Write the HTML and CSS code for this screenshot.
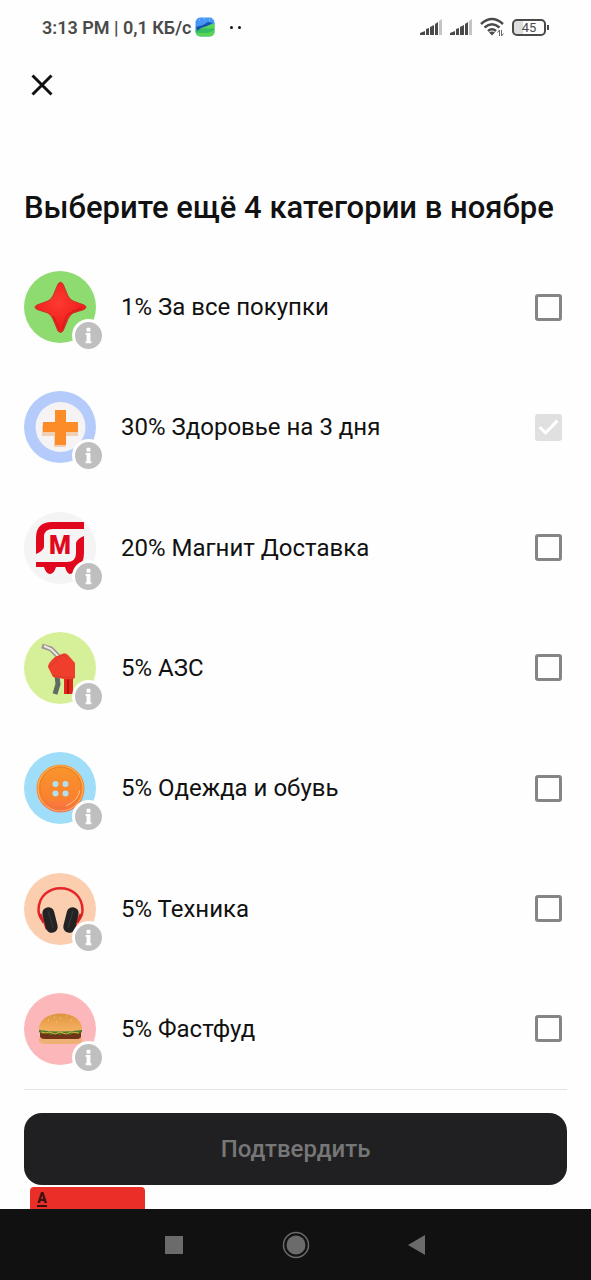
FILE: index.html
```html
<!DOCTYPE html>
<html lang="ru">
<head>
    <meta charset="UTF-8">
    <meta name="viewport" content="width=device-width, initial-scale=1.0">
    <title>Категории кэшбэка</title>
    <link rel="stylesheet" href="styles.css">
</head>
<body>

<!-- Shared icons -->
<svg class="sprite" aria-hidden="true">
    <symbol id="info" viewBox="0 0 28 28">
        <rect x="12" y="6" width="4" height="4" rx="1"/>
        <path d="M11 11.500h5v8.500h1v2h-6v-2h1v-6.500h-1z"/>
    </symbol>
    <symbol id="signal" viewBox="0 0 24 18">
        <path d="M0 17v-2l5-2v4zM6 17v-6l3-1v7zM10 17v-8l4-2v10zM15 17v-11l3-2v13z" fill="#4a4a4a"/>
        <path d="M19 17v-14l3-2v16z" fill="#c4c4c4"/>
    </symbol>
</svg>

<div class="status-bar">
    <span class="clock">3:13 PM | 0,1 КБ/с</span>
    <svg class="app-icon" viewBox="0 0 20 20">
        <rect x="0.500" y="0.500" width="19" height="19" rx="5" fill="#4596f5"/>
        <path d="M0.500 12C6 6 13 10 19.500 6V15Q19 19.500 14 19.500H6Q1 19.500 0.500 14z" fill="#58d653"/>
        <path d="M1 14C6 9 13 13 19 11V13C12 18 6 15 1 16z" fill="#34bd62"/>
        <path d="M1 10L8 8L13 5L18 6L12 9L6 11L2 14z" fill="#174fb5"/>
        <path d="M4 3h1M9 2h1M14 3h1M17 2h1" stroke="#a8d8ff" stroke-width="1"/>
    </svg>
    <span class="dots"><i></i><i></i></span>
    <svg class="signal"><use href="#signal"/></svg>
    <svg class="signal"><use href="#signal"/></svg>
    <svg class="wifi" viewBox="0 0 24 20">
        <g fill="none" stroke="#4a4a4a" stroke-width="2.500">
            <path d="M1 7Q12 -3 23 7"/>
            <path d="M4.500 10.500Q12 4 19.500 10.500"/>
            <path d="M8 14Q12 10.500 16 14"/>
        </g>
        <path d="M9 15.500Q12 13.500 15 15.500L12 18.500z" fill="#4a4a4a"/>
        <path d="M19.500 19v-6l-2 2.500M21.500 13v6l2-2.500" fill="none" stroke="#6a6a6a"/>
    </svg>
    <span class="battery">45</span>
</div>

<header class="top-bar">
    <button class="close" type="button" aria-label="Закрыть">
        <svg viewBox="0 0 22 22"><path d="M1.500 1.500L20.500 20.500M20.500 1.500L1.500 20.500"/></svg>
    </button>
</header>

<main class="content">
    <h1>Выберите ещё 4 категории в ноябре</h1>

    <ul class="categories">
        <li class="category">
            <div class="picture">
                <svg viewBox="0 0 72 72">
                    <defs>
                        <radialGradient id="star" cx="45%" cy="40%">
                            <stop offset="0" stop-color="#ff3a32"/>
                            <stop offset="1" stop-color="#ee1f1d"/>
                        </radialGradient>
                    </defs>
                    <circle cx="36" cy="36" r="36" fill="#8edc70"/>
                    <path d="M34 13Q36.500 9.500 39 13L44 25Q45.500 28 49 30L60 34Q64 36 60 38.500L49 42Q46 44 44 48L39 60Q36.500 63 34 60L29 48Q27 44 24 42L13 38.500Q9 36 13 34L24 30Q27.500 28 29 25z" fill="url(#star)" stroke="#c5342a" stroke-width="1"/>
                    <path d="M43 44Q50 39 58 37M38 58Q41 50 43 44M29 45Q33 52 35 58" fill="none" stroke="#da1c1a" stroke-width="1.500"/>
                </svg>
                <button class="info" type="button" aria-label="Подробнее"><svg><use href="#info"/></svg></button>
            </div>
            <label for="all">1% За все покупки</label>
            <input type="checkbox" id="all">
        </li>

        <li class="category">
            <div class="picture">
                <svg viewBox="0 0 72 72">
                    <circle cx="36" cy="36" r="36" fill="#b4cbfb"/>
                    <circle cx="36.500" cy="36" r="25" fill="#f5f3f3"/>
                    <path d="M31 21h11v12h12v12h-12v11h-12v-11h-12v-11h13z" fill="#f0cfb3"/>
                    <path d="M31 19h11v12h12v10h-12v13h-11v-13h-12v-10h12z" fill="#fb8c28"/>
                </svg>
                <button class="info" type="button" aria-label="Подробнее"><svg><use href="#info"/></svg></button>
            </div>
            <label for="health">30% Здоровье на 3 дня</label>
            <input type="checkbox" id="health" checked disabled>
        </li>

        <li class="category">
            <div class="picture">
                <svg viewBox="0 0 72 72">
                    <circle cx="36" cy="36" r="36" fill="#f4f4f4"/>
                    <g fill="#e1071c">
                        <path d="M60 10v7H29Q20 17 20 25V35Q19 39 12 42V26Q12 10 28 10z"/>
                        <path d="M60 24V41Q60 53 52 55Q50 62 46 62Q43 62 41 55H32Q30 62 26 62Q22 62 20 55H12V50H43Q52 50 52 41V31Q53 27 60 24z"/>
                    </g>
                    <text class="magnit-letter" x="36" y="42" text-anchor="middle">М</text>
                </svg>
                <button class="info" type="button" aria-label="Подробнее"><svg><use href="#info"/></svg></button>
            </div>
            <label for="magnit">20% Магнит Доставка</label>
            <input type="checkbox" id="magnit">
        </li>

        <li class="category">
            <div class="picture">
                <svg viewBox="0 0 72 72">
                    <circle cx="36" cy="36" r="36" fill="#d6f09a"/>
                    <path d="M18 14L27 17L35 25" fill="none" stroke="#9a958e" stroke-width="5"/>
                    <path d="M20 14L27 17L35 25" fill="none" stroke="#eee9e4" stroke-width="2"/>
                    <path d="M33 44L34 52L31 62" fill="none" stroke="#626b61" stroke-width="5"/>
                    <path d="M40 44h9v18h-9z" fill="#e3251b"/>
                    <path d="M44 47v15" stroke="#ad1711" stroke-width="2"/>
                    <path d="M31 25L38 22Q41 20 44 23L51 31V46Q46 48 40 47L29 45L24 35Q24 31 31 25z" fill="#ef3f2c"/>
                    <path d="M31 26L39 23L44 27M25 35L33 28M29 44L50 46" fill="none" stroke="#d83a29" stroke-width="1"/>
                </svg>
                <button class="info" type="button" aria-label="Подробнее"><svg><use href="#info"/></svg></button>
            </div>
            <label for="fuel">5% АЗС</label>
            <input type="checkbox" id="fuel">
        </li>

        <li class="category">
            <div class="picture">
                <svg viewBox="0 0 72 72">
                    <defs>
                        <linearGradient id="button" x1="0" y1="0" x2="0" y2="1">
                            <stop offset="0" stop-color="#f8962c"/>
                            <stop offset="0.700" stop-color="#fa822f"/>
                            <stop offset="1" stop-color="#fa6a50"/>
                        </linearGradient>
                    </defs>
                    <circle cx="36" cy="36" r="36" fill="#a0ddf8"/>
                    <circle cx="36.500" cy="36.500" r="24" fill="url(#button)"/>
                    <circle cx="36.500" cy="36.500" r="22.500" fill="none" stroke="#ffb561" stroke-width="1"/>
                    <circle cx="36.500" cy="35.500" r="20.500" fill="none" stroke="#ea7c26" stroke-width="1"/>
                    <path d="M42 54Q54 49 56 38" fill="none" stroke="#ffc185" stroke-width="1"/>
                    <g fill="#b3e0ef">
                        <circle cx="31.500" cy="32" r="3"/>
                        <circle cx="41.500" cy="32" r="3"/>
                        <circle cx="31.500" cy="41.500" r="3"/>
                        <circle cx="41.500" cy="41.500" r="3"/>
                    </g>
                </svg>
                <button class="info" type="button" aria-label="Подробнее"><svg><use href="#info"/></svg></button>
            </div>
            <label for="clothes">5% Одежда и обувь</label>
            <input type="checkbox" id="clothes">
        </li>

        <li class="category">
            <div class="picture">
                <svg viewBox="0 0 72 72">
                    <circle cx="36" cy="36" r="36" fill="#fbceb0"/>
                    <path d="M19 48Q14.500 43 14.500 37C15 8 58 8 58.500 37Q58.500 43 54 48" fill="none" stroke="#e52528" stroke-width="2.500"/>
                    <path d="M16 41L20 50M57 41L53 50" stroke="#d41f22" stroke-width="3"/>
                    <path d="M21 50L23 56M52 50L50 56" stroke="#e52528" stroke-width="3"/>
                    <rect x="20" y="34" width="12" height="26" rx="6" transform="rotate(-14 26 47)" fill="#232323"/>
                    <rect x="41" y="34" width="12" height="26" rx="6" transform="rotate(14 47 47)" fill="#232323"/>
                    <path d="M24 38L29 55M49 38L44 55" stroke="#3a3a3a" stroke-width="1"/>
                </svg>
                <button class="info" type="button" aria-label="Подробнее"><svg><use href="#info"/></svg></button>
            </div>
            <label for="tech">5% Техника</label>
            <input type="checkbox" id="tech">
        </li>

        <li class="category">
            <div class="picture">
                <svg viewBox="0 0 72 72">
                    <defs>
                        <linearGradient id="bun" x1="0" y1="0" x2="0" y2="1">
                            <stop offset="0" stop-color="#d9953f"/>
                            <stop offset="0.500" stop-color="#eda450"/>
                            <stop offset="1" stop-color="#f2b062"/>
                        </linearGradient>
                    </defs>
                    <circle cx="36" cy="36" r="36" fill="#fbb7b9"/>
                    <path d="M15 45h43v3Q57 51 51 51H22Q15 51 15 47z" fill="#eeb073"/>
                    <path d="M16 39h41v5Q56 46 52 46H21Q16 46 16 43z" fill="#713419"/>
                    <path d="M15 37h43v2l-4 2-4-1-4 2-5-2-5 2-5-2-4 2-5-2-4 1-3-2z" fill="#47792b"/>
                    <path d="M17 39l5 1 3-1 6 2 5-2 6 2 5-2 8 1" fill="none" stroke="#d9b336" stroke-width="1"/>
                    <path d="M15 37C14 15 59 15 58 37Q36 40 15 37z" fill="url(#bun)"/>
                    <path d="M24 27h1M30 24h1M36 25h1M42 23h1M47 27h1M32 29h1" stroke="#f7cf8c" stroke-width="1"/>
                </svg>
                <button class="info" type="button" aria-label="Подробнее"><svg><use href="#info"/></svg></button>
            </div>
            <label for="fastfood">5% Фастфуд</label>
            <input type="checkbox" id="fastfood">
        </li>
    </ul>
</main>

<footer class="actions">
    <button class="confirm" type="button" disabled>Подтвердить</button>
    <div class="card"><span>А</span></div>
</footer>

<nav class="nav-bar">
    <button type="button" aria-label="Недавние"><svg viewBox="0 0 28 28"><path d="M5 5h18v18H5z"/></svg></button>
    <button type="button" aria-label="Домой"><svg viewBox="0 0 28 28"><circle cx="14" cy="14" r="9.500"/><circle cx="14" cy="14" r="12.500" fill="none" stroke="#6b6b6b" stroke-width="1.500"/></svg></button>
    <button type="button" aria-label="Назад"><svg viewBox="0 0 28 28"><path d="M4 14L21 4v20z"/></svg></button>
</nav>

</body>
</html>
```
FILE: styles.css
```css
* {
    box-sizing: border-box;
}

body {
    display: flex;
    flex-direction: column;
    min-height: 100vh;
    margin: 0;
    background-color: #fefefe;
    color: #111;
    font-family: Roboto, "Liberation Sans", sans-serif;
}

button {
    padding: 0;
    border: 0;
    background: none;
    font-family: inherit;
}

svg {
    display: block;
}

.sprite {
    position: absolute;
    width: 0;
    height: 0;
}

/* Phone status bar */
.status-bar {
    display: flex;
    align-items: center;
    height: 54px;
    padding: 0 45px 0 42px;
    color: #4a4a4a;
}

.clock {
    font-size: 18px;
    font-weight: 600;
}

.app-icon {
    width: 20px;
    height: 20px;
    margin-left: 4px;
}

.dots {
    display: flex;
    gap: 5px;
    margin-left: 15px;
    margin-right: auto;
}

.dots i {
    width: 3px;
    height: 3px;
    border-radius: 50%;
    background-color: #111;
}

.signal {
    width: 24px;
    height: 18px;
    margin-right: 6px;
}

.wifi {
    width: 24px;
    height: 20px;
    margin-right: 8px;
}

.battery {
    position: relative;
    width: 34px;
    height: 17px;
    border: 2px solid #4a4a4a;
    border-radius: 5px;
    background: linear-gradient(to right, #dedede 30%, #fefefe 30%);
    font-size: 13px;
    line-height: 14px;
    text-align: center;
}

.battery::after {
    content: "";
    position: absolute;
    top: 4px;
    right: -5px;
    width: 2px;
    height: 5px;
    background-color: #4a4a4a;
}

/* Header */
.top-bar {
    padding: 9px 20px;
}

.close {
    display: flex;
    align-items: center;
    justify-content: center;
    width: 44px;
    height: 44px;
}

.close svg {
    width: 22px;
    height: 22px;
    fill: none;
    stroke: #111;
    stroke-width: 3;
}

.content {
    display: flex;
    flex: 1;
    flex-direction: column;
    padding: 0 24px;
}

h1 {
    margin: 72px 0 20px;
    font-size: 31px;
    font-weight: 500;
    line-height: 39px;
}

/* Category list */
.categories {
    display: flex;
    flex: 1;
    flex-direction: column;
    margin: 0;
    padding: 0;
    border-bottom: 1px solid #e2e2e2;
    list-style: none;
}

.category {
    display: flex;
    flex: 1;
    align-items: center;
    gap: 25px;
    min-height: 96px;
    padding-right: 5px;
    font-size: 24px;
}

.category label {
    flex: 1;
}

.picture {
    position: relative;
    width: 72px;
    height: 72px;
}

.info {
    position: absolute;
    right: -9px;
    bottom: -9px;
    width: 33px;
    height: 33px;
    border: 3px solid #fefefe;
    border-radius: 50%;
    background-color: #bfbfbf;
}

.info svg {
    width: 27px;
    height: 27px;
    fill: #fff;
}

.magnit-letter {
    fill: #e1071c;
    font-size: 25px;
    font-weight: 900;
}

input[type="checkbox"] {
    width: 27px;
    height: 27px;
    margin: 0;
    border: 3px solid #858585;
    border-radius: 3px;
    appearance: none;
}

input[type="checkbox"]:checked {
    border: 0;
    background-color: #e0e0e0;
}

input[type="checkbox"]:checked::after {
    content: "";
    display: block;
    width: 27px;
    height: 27px;
    background-color: #fff;
    clip-path: polygon(13% 52%, 21% 45%, 39% 62%, 79% 21%, 87% 30%, 39% 78%);
}

/* Bottom button with the card peeking out under it */
.actions {
    padding: 23px 24px 0;
}

.confirm {
    display: block;
    width: 100%;
    height: 72px;
    border-radius: 18px;
    background-color: #202022;
    color: #777;
    font-size: 24px;
    font-weight: 500;
}

.card {
    width: 115px;
    height: 22px;
    margin: 2px 6px 0;
    padding: 5px 7px;
    border-radius: 4px 4px 0 0;
    background-color: #e92f28;
}

.card span {
    display: block;
    width: 10px;
    border-bottom: 2px solid #3b1110;
    color: #3b1110;
    font-size: 14px;
    font-weight: 900;
    line-height: 13px;
    text-align: center;
}

/* Phone navigation */
.nav-bar {
    display: flex;
    align-items: center;
    justify-content: center;
    gap: 94px;
    height: 71px;
    background-color: #111;
}

.nav-bar svg {
    width: 28px;
    height: 28px;
    fill: #6b6b6b;
}
```
